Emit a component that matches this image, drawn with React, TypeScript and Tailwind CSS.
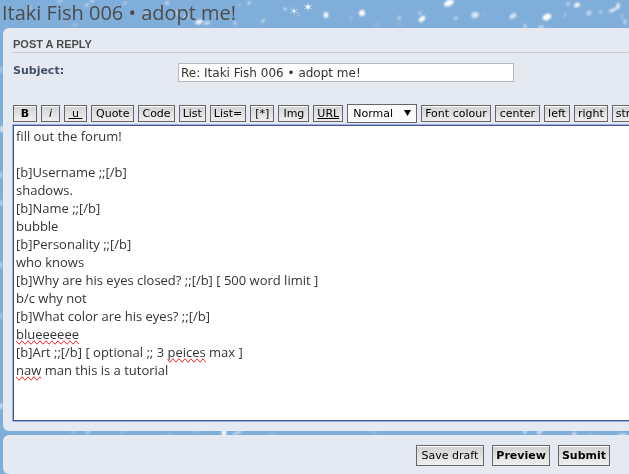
import { useState, type ReactNode } from 'react'

const MESSAGE = `fill out the forum!

[b]Username ;;[/b]
shadows.
[b]Name ;;[/b]
bubble
[b]Personality ;;[/b]
who knows
[b]Why are his eyes closed? ;;[/b] [ 500 word limit ]
b/c why not
[b]What color are his eyes? ;;[/b]
blueeeeee
[b]Art ;;[/b] [ optional ;; 3 peices max ]
naw man this is a tutorial`

const MISSPELLED = /(blueeeeee|peices|naw)/

// x, y, half width, half height, rotation, opacity
const FLAKES = [
    [30, 8, 3, 2, -30, 0.3], [60, 1, 4, 2, -20, 0.4], [87, 5, 3, 2, -30, 0.5], [92, 1, 3, 2, 0, 0.5],
    [75, 25, 3, 1, -30, 0.5], [125, 3, 3, 2, -30, 0.4], [146, 13, 2, 2, 0, 0.5], [167, 3, 3, 2, -30, 0.6],
    [177, 13, 4, 2, -60, 0.5], [186, 17, 3, 2, -40, 0.7], [199, 22, 5, 3, -20, 0.9], [207, 23, 4, 2, -20, 0.7],
    [217, 15, 2, 2, 0, 0.5], [235, 23, 2, 2, 0, 0.6], [240, 5, 2, 1, -40, 0.5], [249, 3, 3, 2, -60, 0.5],
    [263, 21, 3, 2, -60, 0.5], [285, 9, 2, 2, 0, 0.7], [299, 15, 2, 1, 0, 0.5], [326, 15, 3, 4, 0, 1],
    [351, 18, 3, 1, -50, 0.4], [362, 13, 4, 4, -30, 1], [377, 25, 4, 1, -40, 0.3], [399, 18, 3, 2, -60, 0.5],
    [400, 24, 2, 1, 60, 0.4], [420, 13, 3, 2, -50, 0.4], [422, 19, 5, 3, -40, 1], [449, 3, 7, 4, -25, 1],
    [456, 18, 3, 2, -50, 0.5], [475, 15, 5, 4, -25, 0.7], [485, 14, 1, 3, 0, 0.2], [513, 16, 5, 3, -35, 0.7],
    [525, 26, 2, 3, 0, 0.5], [547, 17, 6, 4, -25, 1], [541, 27, 4, 2, -10, 0.6], [565, 15, 1, 4, 10, 0.4],
    [568, 4, 3, 2, -50, 0.5], [577, 5, 4, 3, -25, 0.9], [589, 13, 4, 3, -35, 0.5], [601, 12, 2, 2, 0, 0.6],
    [613, 10, 6, 2, -25, 0.8], [618, 6, 2, 4, 0, 0.9], [622, 16, 1, 3, 0, 0.5], [625, 22, 2, 4, -10, 0.5],
    [1, 70, 2, 4, 0, 0.4], [2, 129, 3, 4, 0, 0.7], [1, 175, 2, 4, 0, 0.5], [1, 203, 2, 4, 0, 0.5],
    [1, 265, 2, 4, 0, 0.5], [1, 316, 2, 4, 0, 0.3], [1, 406, 2, 4, 0, 0.7],
    [73, 432, 3, 1, -30, 0.4], [88, 432, 4, 2, -30, 0.5], [122, 433, 3, 1, -40, 0.4], [170, 435, 5, 1, 0, 0.4],
    [197, 431, 6, 1, 0, 0.3], [224, 433, 3, 5, 0, 1], [237, 433, 7, 2, -25, 0.5], [272, 434, 3, 1, 0, 0.3],
    [375, 432, 3, 1, -10, 0.3], [525, 432, 3, 2, -30, 0.7], [540, 432, 5, 2, -35, 0.7], [574, 434, 3, 2, -50, 0.8],
    [590, 435, 5, 1, 0, 0.4], [622, 435, 6, 2, -10, 0.6],
]

function Snow() {
    return (
        <svg className="absolute inset-0 h-full w-full" aria-hidden="true">
            <defs>
                <filter id="soft">
                    <feGaussianBlur stdDeviation="0.9" />
                </filter>
            </defs>
            <g fill="#fff" filter="url(#soft)">
                {FLAKES.map(([x, y, w, h, angle, opacity]) => (
                    <ellipse
                        key={`${x}-${y}`}
                        cx={x}
                        cy={y}
                        rx={w * 0.75}
                        ry={h * 0.75}
                        opacity={opacity}
                        transform={`rotate(${angle} ${x} ${y})`}
                    />
                ))}
            </g>
            {/* Six-pointed flakes */}
            <g stroke="#fff" strokeWidth="1" opacity="0.4">
                <path d="M294 7v8M290 9l8 4M298 9l-8 4" />
                <path d="M308 3v8M304 5l8 4M312 5l-8 4" />
            </g>
            <g fill="#fff">
                <circle cx="294" cy="11" r="1.5" opacity="0.7" />
                <circle cx="308" cy="7" r="2" opacity="0.9" />
            </g>
        </svg>
    )
}

const face =
    'border border-[#666] bg-linear-to-b from-[#d2d2d2] to-[#efefef] text-black shadow-[inset_0_1px_0_#fff] whitespace-nowrap'

function ToolButton({ children, className = 'px-[3px]' }: { children: ReactNode; className?: string }) {
    return (
        <button type="button" className={`${face} h-[17px] shrink-0 text-[11px] leading-[15px] ${className}`}>
            {children}
        </button>
    )
}

function SubmitButton({ children, className }: { children: ReactNode; className: string }) {
    return (
        <button type="button" className={`${face} h-[21px] text-[11px] leading-[19px] ${className}`}>
            {children}
        </button>
    )
}

const messageText =
    'block w-full border border-r-0 px-0.5 pt-px pb-[5px] font-["Open_Sans","Noto_Sans",sans-serif] text-[13px] leading-[18px] whitespace-pre-wrap'

function MessageBox() {
    const [message, setMessage] = useState(MESSAGE)

    return (
        <div className="relative bg-white">
            {/* Spelling marks, under the text area */}
            <div aria-hidden="true" className={`${messageText} absolute inset-0 overflow-hidden border-transparent text-transparent`}>
                {message.split(MISSPELLED).map((part, i) =>
                    i % 2 ? (
                        <span key={i} className="[text-decoration-line:spelling-error]">
                            {part}
                        </span>
                    ) : (
                        part
                    )
                )}
            </div>
            <textarea
                aria-label="Message"
                rows={16}
                spellCheck={false}
                value={message}
                onChange={(e) => setMessage(e.target.value)}
                className={`${messageText} relative resize-none overflow-hidden border-[#4d5293] bg-transparent text-[#333] shadow-[0_0_0_1px_#94b3ee] outline-none`}
            />
        </div>
    )
}

export default function App() {
    return (
        <div className="relative min-h-screen overflow-hidden bg-[#80aeda] font-['DejaVu_Sans',sans-serif] text-[11px]">
            <Snow />

            <div className="relative">
                <h1 className="h-7 pl-0.5 font-['Open_Sans','Noto_Sans',sans-serif] text-[20px] leading-[26px] whitespace-nowrap text-[#4c4c4c]">
                    Itaki Fish 006 • adopt me!
                </h1>

                <form className="ml-[3px]" onSubmit={(e) => e.preventDefault()}>
                    {/* Reply panel */}
                    <div className="rounded-l-[6px] bg-[#e5eaf2] pt-[9px] pb-[10px] pl-[10px]">
                        <h2 className="border-b border-[#ccc] pb-px font-['Liberation_Sans',sans-serif] text-[11px] leading-[14px] font-bold text-[#4c4c4c] uppercase">
                            Post a reply
                        </h2>

                        <div className="flex pt-[10px]">
                            <label htmlFor="subject" className="w-[165px] shrink-0 pt-px leading-[14px] font-bold text-[#425067]">
                                Subject:
                            </label>
                            <input
                                id="subject"
                                type="text"
                                defaultValue="Re: Itaki Fish 006 • adopt me!"
                                className="h-[19px] w-[336px] border border-[#b4bac0] bg-white px-0.5 pt-px text-[12px] text-[#333]"
                            />
                        </div>

                        {/* BBCode toolbar */}
                        <div className="mt-[22px] mb-0.5 flex h-[19px] items-center gap-1 overflow-hidden">
                            <ToolButton className="w-6 font-bold">B</ToolButton>
                            <ToolButton className="w-[19px] italic">i</ToolButton>
                            <ToolButton className="w-[23px] underline">&nbsp;u&nbsp;</ToolButton>
                            <ToolButton className="px-1">Quote</ToolButton>
                            <ToolButton>Code</ToolButton>
                            <ToolButton>List</ToolButton>
                            <ToolButton>List=</ToolButton>
                            <ToolButton className="px-1">[*]</ToolButton>
                            <ToolButton className="px-1">Img</ToolButton>
                            <ToolButton className="px-[3px] underline">URL</ToolButton>
                            <div className="relative shrink-0">
                                <select
                                    aria-label="Font size"
                                    defaultValue="Normal"
                                    className="block h-[19px] w-[70px] appearance-none border border-[#666] bg-[#fafafa] pt-px pl-[5px] text-[11px] text-black"
                                >
                                    <option>Tiny</option>
                                    <option>Small</option>
                                    <option>Normal</option>
                                    <option>Large</option>
                                    <option>Huge</option>
                                </select>
                                <svg className="pointer-events-none absolute top-[6px] right-[6px] h-[6px] w-[7px]" viewBox="0 0 7 6" aria-hidden="true">
                                    <path d="M0 0h7L3.5 6z" />
                                </svg>
                            </div>
                            <ToolButton>Font colour</ToolButton>
                            <ToolButton className="px-1">center</ToolButton>
                            <ToolButton>left</ToolButton>
                            <ToolButton>right</ToolButton>
                            <ToolButton>strike</ToolButton>
                        </div>

                        <MessageBox />
                    </div>

                    {/* Form actions */}
                    <div className="mt-1 flex justify-end gap-2 rounded-l-[6px] bg-[#e5eaf2] pt-[10px] pr-[19px] pb-2">
                        <SubmitButton className="px-[5px]">Save draft</SubmitButton>
                        <SubmitButton className="px-[3px] font-bold">Preview</SubmitButton>
                        <SubmitButton className="px-[3px] font-bold">Submit</SubmitButton>
                    </div>
                </form>
            </div>
        </div>
    )
}
